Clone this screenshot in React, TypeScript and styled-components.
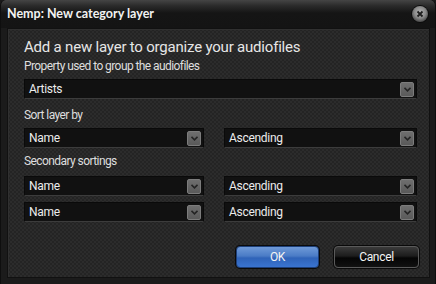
import React from "react";
import styled, { createGlobalStyle } from "styled-components";

const Global = createGlobalStyle`
  html, body { margin: 0; padding: 0; background: #1a1a1a; }
  body { font-family: Roboto, "Liberation Sans", sans-serif; }
`;

const Window = styled.div`
  width: 436px;
  height: 284px;
  box-sizing: border-box;
  display: flex;
  flex-direction: column;
  background: #1b1b1b;
  border-left: 1px solid #0e0e0e;
  border-right: 1px solid #0e0e0e;
  border-radius: 6px 6px 0 0;
  overflow: hidden;
`;

const TitleBar = styled.div`
  height: 28px;
  flex: none;
  display: flex;
  align-items: center;
  justify-content: space-between;
  padding: 0 7px 0 6px;
  background: linear-gradient(#454545 0px, #2a2a2a 6px, #151515 13px, #141414 100%);
`;

const Title = styled.div`
  font-family: Lato, sans-serif;
  font-weight: bold;
  font-size: 12.5px;
  color: #f2f2f2;
  margin-top: -1px;
`;

const CloseButton = styled.div`
  width: 16px;
  height: 16px;
  border-radius: 50%;
  background: radial-gradient(circle at 50% 40%, #b5b5b5 0, #8a8a8a 45%, #555 70%, #2a2a2a 100%);
  display: flex;
  align-items: center;
  justify-content: center;
  box-shadow: 0 0 0 1px #0c0c0c;
`;

const Panel = styled.div`
  flex: 1;
  margin: 0 5px 6px 6px;
  box-sizing: border-box;
  border: 1px solid #111;
  box-shadow: inset 1px 1px 0 #303030;
  background-color: #282828;
  background-image: repeating-conic-gradient(#2c2c2c 0 25%, #242424 0 50%);
  background-size: 4px 4px;
  padding: 8px 12px 0 16px;
  display: flex;
  flex-direction: column;
`;

const Heading = styled.div`
  font-size: 15px;
  line-height: 20px;
  letter-spacing: -0.2px;
  color: #e6e6e6;
`;

const Label = styled.div<{ $top: number }>`
  font-size: 12px;
  line-height: 15px;
  letter-spacing: -0.58px;
  color: #dedede;
  margin-top: ${(p) => p.$top}px;
`;

const Row = styled.div<{ $top: number }>`
  display: grid;
  grid-template-columns: 180px 1fr;
  column-gap: 20px;
  margin-top: ${(p) => p.$top}px;
`;

const Combo = styled.div<{ $top?: number }>`
  height: 20px;
  box-sizing: border-box;
  margin-top: ${(p) => p.$top ?? 0}px;
  background: #111111;
  border: 1px solid #0a0a0a;
  border-bottom-color: #3c3c3c;
  display: flex;
  align-items: center;
  justify-content: space-between;
  padding: 0 2px 0 4px;
  font-size: 12px;
  letter-spacing: -0.3px;
  color: #ececec;
`;

const DropButton = styled.div`
  width: 14px;
  height: 15px;
  box-sizing: border-box;
  border: 1px solid #7c7c7c;
  border-radius: 2px;
  background: linear-gradient(#6e6e6e, #5a5a5a);
  display: flex;
  align-items: center;
  justify-content: center;
`;

const Buttons = styled.div`
  display: flex;
  justify-content: flex-end;
  gap: 15px;
  margin-top: 24px;
  margin-right: -2px;
`;

const Button = styled.div<{ $primary?: boolean; $w: number }>`
  width: ${(p) => p.$w}px;
  height: 22px;
  box-sizing: border-box;
  border-radius: 4px;
  display: flex;
  align-items: center;
  justify-content: center;
  font-size: 12px;
  letter-spacing: -0.3px;
  color: #f4f4f4;
  border: 1px solid ${(p) => (p.$primary ? "#1d3f78" : "#5a5a5a")};
  background: ${(p) =>
    p.$primary
      ? "linear-gradient(#6f9ad8 0%, #4a7bc6 45%, #2f63b8 55%, #3a74d0 100%)"
      : "linear-gradient(#3a3a3a 0%, #1c1c1c 45%, #050505 55%, #111 100%)"};
  box-shadow: 0 0 0 1px #0a0a0a;
`;

const Chevron = () => (
  <svg width="7" height="5" viewBox="0 0 7 5">
    <path d="M0.5 0.8 L3.5 3.8 L6.5 0.8" fill="none" stroke="#242424" strokeWidth="1.6" />
  </svg>
);

const CloseX = () => (
  <svg width="8" height="8" viewBox="0 0 8 8">
    <path d="M1.5 1.5 L6.5 6.5 M6.5 1.5 L1.5 6.5" stroke="#1e1e1e" strokeWidth="1.8" />
  </svg>
);

const Select = ({ value, top }: { value: string; top?: number }) => (
  <Combo $top={top}>
    <span>{value}</span>
    <DropButton>
      <Chevron />
    </DropButton>
  </Combo>
);

export default function App() {
  return (
    <>
      <Global />
      <Window>
        <TitleBar>
          <Title>Nemp: New category layer</Title>
          <CloseButton>
            <CloseX />
          </CloseButton>
        </TitleBar>
        <Panel>
          <Heading>Add a new layer to organize your audiofiles</Heading>
          <Label $top={2}>Property used to group the audiofiles</Label>
          <Select value="Artists" top={5} />
          <Label $top={9}>Sort layer by</Label>
          <Row $top={5}>
            <Select value="Name" />
            <Select value="Ascending" />
          </Row>
          <Label $top={6}>Secondary sortings</Label>
          <Row $top={7}>
            <Select value="Name" />
            <Select value="Ascending" />
          </Row>
          <Row $top={6}>
            <Select value="Name" />
            <Select value="Ascending" />
          </Row>
          <Buttons>
            <Button $primary $w={83}>OK</Button>
            <Button $w={85}>Cancel</Button>
          </Buttons>
        </Panel>
      </Window>
    </>
  );
}
